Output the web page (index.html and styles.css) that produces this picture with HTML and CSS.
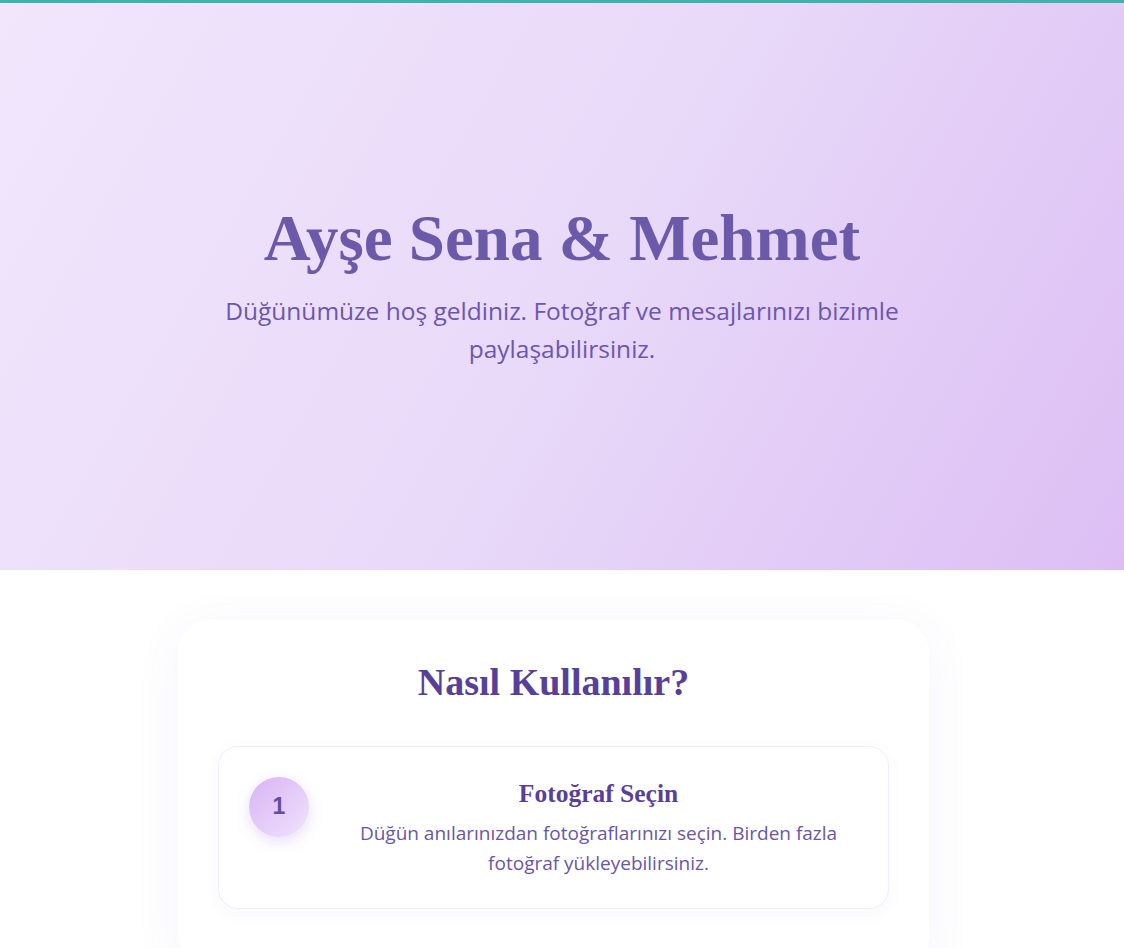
FILE: index.html
```html
<!DOCTYPE html>
<html lang="tr">
<head>
<meta charset="utf-8">
<title>Ayşe Sena &amp; Mehmet</title>
<link rel="stylesheet" href="styles.css">
</head>
<body>
<div class="topbar"></div>
<header class="hero">
  <div class="hero-inner">
    <h1 class="hero-title">Ayşe Sena &amp; Mehmet</h1>
    <p class="hero-sub">Düğünümüze hoş geldiniz. Fotoğraf ve mesajlarınızı bizimle paylaşabilirsiniz.</p>
  </div>
</header>
<main class="page">
  <section class="card">
    <h2 class="card-title">Nasıl Kullanılır?</h2>
    <div class="steps">
      <div class="step">
        <div class="step-num">1</div>
        <div class="step-body">
          <h3 class="step-title">Fotoğraf Seçin</h3>
          <p class="step-text">Düğün anılarınızdan fotoğraflarınızı seçin. Birden fazla fotoğraf yükleyebilirsiniz.</p>
        </div>
      </div>
    </div>
  </section>
</main>
</body>
</html>
```
FILE: styles.css
```css
* { box-sizing: border-box; }
html, body { margin: 0; padding: 0; }
body {
  background: #ffffff;
  font-family: "Open Sans", "Noto Sans", sans-serif;
  color: #6a55a8;
}
.topbar {
  height: 3px;
  background: #42b1ab;
}
.hero {
  height: 567px;
  background: linear-gradient(120deg, #f1e6fc 0%, #e9daf9 50%, #dcbef4 100%);
  display: flex;
  align-items: center;
  justify-content: center;
  text-align: center;
  padding-bottom: 6px;
}
.hero-inner {
  max-width: 740px;
}
.hero-title {
  margin: 0 0 15px;
  font-family: "Liberation Serif", "Times New Roman", serif;
  font-weight: 700;
  font-size: 65px;
  line-height: 1.2;
  color: #6b5aaa;
}
.hero-sub {
  margin: 0;
  font-size: 24.5px;
  line-height: 38px;
  color: #6c56b0;
}
.page {
  padding: 50px 17px 40px 0;
}
.card {
  width: 751px;
  margin: 0 auto;
  background: #fff;
  border-radius: 32px;
  padding: 40px 40px 60px 40px;
  box-shadow: 0 10px 45px rgba(110, 90, 190, 0.08);
}
.card-title {
  margin: 0 0 40px;
  text-align: center;
  font-family: "Liberation Serif", "Times New Roman", serif;
  font-weight: 700;
  font-size: 38px;
  line-height: 1.2;
  color: #564099;
}
.steps {
  display: flex;
  flex-direction: column;
  gap: 30px;
}
.step {
  display: flex;
  align-items: flex-start;
  gap: 30px;
  padding: 30px;
  border: 1px solid #f1eefa;
  border-radius: 20px;
  box-shadow: 0 4px 16px rgba(110, 90, 190, 0.05);
  background: #fff;
}
.step-num {
  flex: 0 0 60px;
  width: 60px;
  height: 60px;
  border-radius: 50%;
  background: linear-gradient(135deg, #d8b3f4 0%, #f0e3fc 100%);
  box-shadow: 0 4px 14px rgba(180, 140, 230, 0.3);
  display: flex;
  align-items: center;
  justify-content: center;
  font-family: "Liberation Sans", Arial, sans-serif;
  font-weight: 700;
  font-size: 23px;
  color: #62509f;
}
.step-body {
  flex: 1;
  text-align: center;
}
.step-title {
  margin: 0 0 8px;
  font-family: "Liberation Serif", "Times New Roman", serif;
  font-weight: 700;
  font-size: 25.5px;
  line-height: 33px;
  color: #5a3f9a;
}
.step-text {
  margin: 0;
  font-size: 19px;
  line-height: 30px;
  color: #6a55a8;
}
```
